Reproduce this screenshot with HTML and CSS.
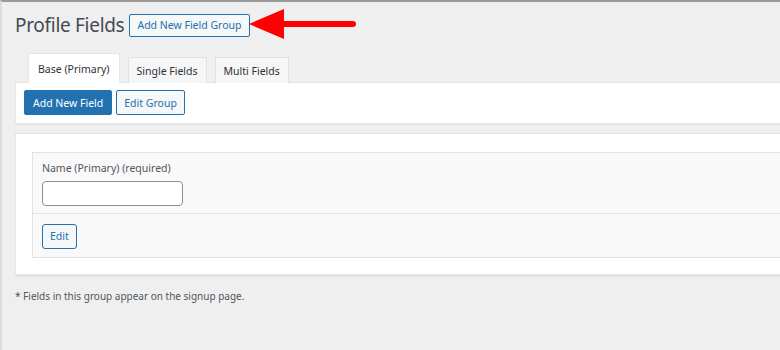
FILE: index.html
```html
<!DOCTYPE html>
<html>
<head>
<meta charset="utf-8">
<link rel="stylesheet" href="styles.css">
</head>
<body>
<div class="screen">
  <div class="wrap">
    <div class="header">
      <h1 class="title">Profile Fields</h1>
      <a class="btn btn-outline btn-group">Add New Field Group</a>
      <svg class="arrow" width="110" height="32" viewBox="0 0 110 32">
        <polygon points="0,15 35,0 35,30" fill="#ff0000"/>
        <line x1="33" y1="15" x2="104" y2="15" stroke="#ff0000" stroke-width="6" stroke-linecap="round"/>
      </svg>
    </div>
    <div class="tabs">
      <div class="tab active">Base (Primary)</div>
      <div class="tab">Single Fields</div>
      <div class="tab">Multi Fields</div>
    </div>
    <div class="panel toolbar">
      <a class="btn btn-primary">Add New Field</a>
      <a class="btn btn-outline">Edit Group</a>
    </div>
    <div class="panel fields">
      <div class="field-box">
        <div class="field-main">
          <label class="label">Name (Primary) (required)</label>
          <div class="input"></div>
        </div>
        <div class="field-actions">
          <a class="btn btn-outline btn-edit">Edit</a>
        </div>
      </div>
    </div>
    <p class="note">* Fields in this group appear on the signup page.</p>
  </div>
</div>
</body>
</html>
```

FILE: styles.css
```css
* { box-sizing: border-box; }
html, body { margin: 0; padding: 0; }
body {
  background: #f0f0f1;
  font-family: "Noto Sans", "Open Sans", sans-serif;
  color: #3c434a;
  width: 780px;
  height: 350px;
  overflow: hidden;
}
.screen {
  height: 350px;
  border-top: 2px solid #9a9a9a;
  border-left: 2px solid #dcdcdc;
  background: #efefef;
}
.wrap {
  padding-left: 13px;
}
.header {
  display: flex;
  align-items: center;
  height: 43px;
  padding-top: 3px;
}
.title {
  margin: 0 5px 0 0;
  font-size: 19px;
  font-weight: 400;
  color: #454b51;
  letter-spacing: -0.3px;
}
.btn {
  display: inline-flex;
  align-items: center;
  justify-content: center;
  height: 25px;
  padding: 0 8px;
  font-size: 10.5px;
  border-radius: 2px;
  border: 1px solid #2271b1;
  text-decoration: none;
  white-space: nowrap;
}
.btn-outline {
  background: #f6f7f7;
  color: #2271b1;
}
.btn-primary {
  background: #2271b1;
  color: #fff;
}
.btn-group {
  height: 23px;
  padding: 0 7px;
}
.arrow {
  display: block;
  margin-left: -1px;
}
.tabs {
  display: flex;
  align-items: flex-end;
  gap: 8px;
  padding-left: 13px;
  height: 37px;
}
.tab {
  height: 26px;
  padding: 0 9px;
  display: flex;
  align-items: center;
  font-size: 10.5px;
  color: #2c3338;
  background: #f6f6f6;
  border: 1px solid #e2e2e2;
  border-bottom: none;
  margin-bottom: -1px;
  position: relative;
}
.tab + .tab {
  padding: 0 8px;
}
.tab.active {
  height: 30px;
  background: #fff;
  border-color: #e6e6e6;
  padding: 0 9px;
}
.panel {
  background: #fff;
  border: 1px solid #e6e6e6;
  border-right: none;
  box-shadow: 0 1px 1px rgba(0,0,0,0.04);
}
.toolbar {
  display: flex;
  gap: 4px;
  padding: 7px 8px 8px;
  height: 42px;
}
.toolbar .btn-outline {
  padding: 0 7px;
}
.fields {
  margin-top: 9px;
  padding: 18px 0 16px 16px;
  border-bottom: 2px solid #e4e4e4;
}
.field-box {
  background: #f9f9f9;
  border: 1px solid #e2e2e2;
  border-right: none;
}
.field-main {
  padding: 8px 9px 7px;
  border-bottom: 1px solid #e2e2e2;
}
.label {
  display: block;
  font-size: 10.5px;
  color: #50575e;
  margin-bottom: 6px;
}
.input {
  width: 141px;
  height: 25px;
  background: #fff;
  border: 1px solid #8c8f94;
  border-radius: 4px;
}
.field-actions {
  padding: 9px 9px 8px;
}
.btn-edit {
  padding: 0 7px;
  border-radius: 3px;
}
.note {
  margin: 13px 0 0;
  font-size: 10px;
  color: #50575e;
}
```
